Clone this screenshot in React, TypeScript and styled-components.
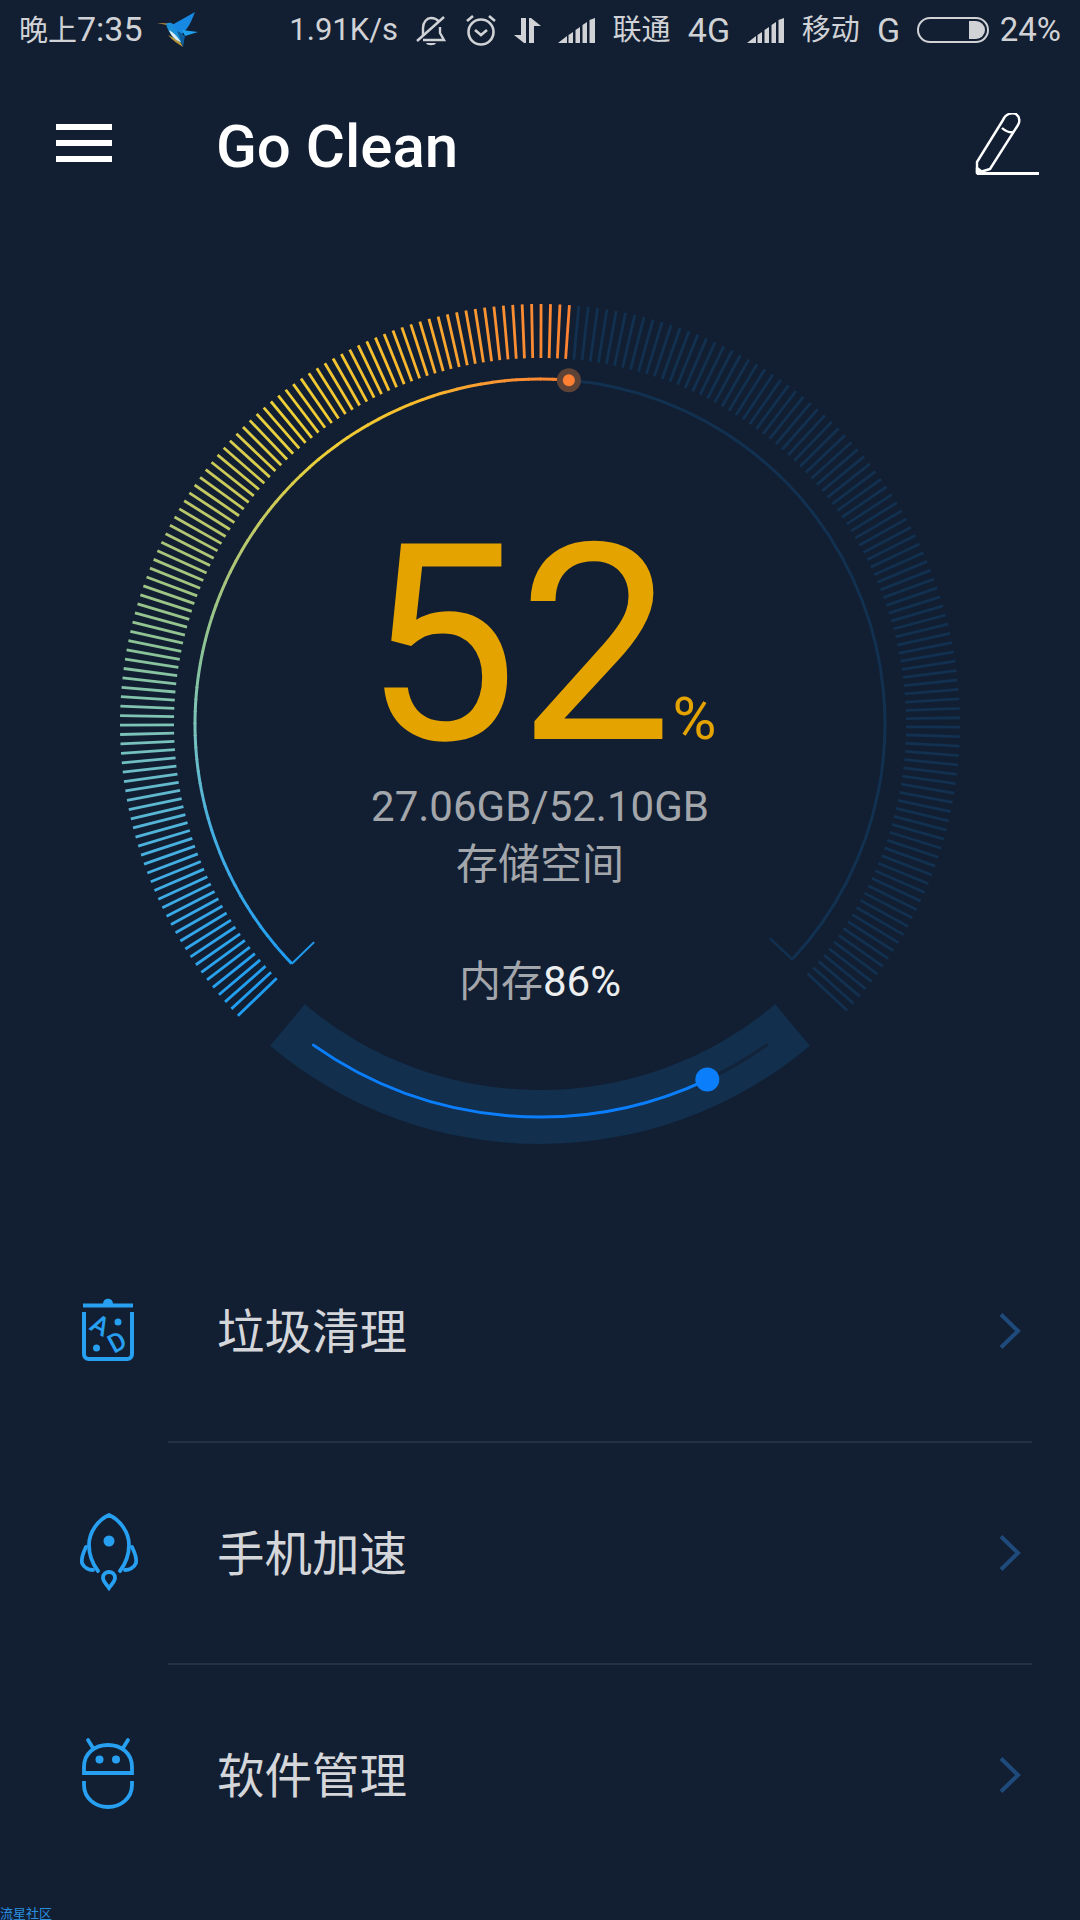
import { createGlobalStyle, styled } from "styled-components";

const GlobalStyle = createGlobalStyle`
    html, body {
        margin: 0;
        padding: 0;
        background: #121f32;
    }
    * {
        box-sizing: border-box;
    }
`;

const FONT = `Roboto, "Noto Sans CJK SC", sans-serif`;
const ICON_BLUE = "#27a0f2";
const CENTER = 430;
const START = -134;
const END = 133;
const STEP = 267 / 207;
const FILL_ANGLE = 4.8;
const INACTIVE = "#12304f";

const Page = styled.div`
    position: relative;
    width: 1080px;
    height: 1920px;
    overflow: hidden;
    background: #121f32;
    font-family: ${FONT};
`;

const StatusBar = styled.div`
    display: flex;
    align-items: center;
    justify-content: space-between;
    height: 60px;
    padding: 0 19px;
    color: #d0d2d6;
`;

const StatusGroup = styled.div<{ $gap: number }>`
    display: flex;
    align-items: center;
    gap: ${({ $gap }) => $gap}px;
`;

const StatusText = styled.span<{ $size: number }>`
    font-size: ${({ $size }) => $size}px;
    line-height: 60px;
    white-space: nowrap;
    small {
        font-size: 29px;
    }
`;

const Battery = styled.div`
    display: flex;
    justify-content: flex-end;
    width: 72px;
    height: 26px;
    padding: 2px;
    margin-right: -7px;
    border: 2px solid #d0d2d6;
    border-radius: 13px;
`;

const BatteryFill = styled.div`
    width: 16px;
    height: 18px;
    background: #d0d2d6;
    border-radius: 0 9px 9px 0;
`;

const Toolbar = styled.div`
    display: flex;
    align-items: center;
    height: 172px;
    padding: 0 40px 0 56px;
`;

const Burger = styled.div`
    display: flex;
    flex-direction: column;
    gap: 10px;
    width: 56px;
    margin-bottom: 6px;
    span {
        display: block;
        height: 6px;
        background: #fff;
    }
`;

const Title = styled.h1`
    flex: 1;
    margin: 2px 0 0 104px;
    color: #fff;
    font-size: 60px;
    font-weight: 500;
    line-height: 70px;
`;

const GaugeArea = styled.div`
    position: relative;
    display: flex;
    justify-content: center;
    height: 989px;
    padding-top: 62px;
`;

const Readout = styled.div`
    position: absolute;
    top: 62px;
    left: 0;
    right: 0;
    display: flex;
    flex-direction: column;
    align-items: center;
    padding-top: 251px;
`;

const Percent = styled.div`
    display: flex;
    align-items: baseline;
    height: 200px;
    color: #e5a300;
    font-size: 275px;
    line-height: 200px;
    small {
        font-size: 60px;
    }
`;

const Usage = styled.div`
    margin-top: 37px;
    color: #a3a6ab;
    font-size: 42px;
    line-height: 50px;
`;

const UsageLabel = styled.div`
    margin-top: 5px;
    color: #a3a6ab;
    font-size: 42px;
    line-height: 56px;
`;

const Memory = styled.div`
    margin-top: 64px;
    color: #a3a6ab;
    font-size: 42px;
    line-height: 50px;
    b {
        color: #eceef0;
        font-weight: 400;
    }
`;

const Menu = styled.div`
    display: flex;
    flex-direction: column;
`;

const Row = styled.div`
    display: flex;
    align-items: center;
    height: 220px;
    padding: 0 59px 0 60px;
`;

const RowLabel = styled.span`
    flex: 1;
    margin-left: 57px;
    padding-bottom: 5px;
    color: #d4d6da;
    font-size: 47.5px;
`;

const Divider = styled.div`
    height: 2px;
    margin: 0 48px 0 168px;
    background: #233147;
`;

const Watermark = styled.span`
    position: absolute;
    left: 0;
    bottom: -2px;
    color: #2a8fe0;
    font-size: 13px;
    line-height: 16px;
`;

const polar = (deg: number, r: number) => {
    const a = (deg * Math.PI) / 180;
    return { x: CENTER + r * Math.sin(a), y: CENTER - r * Math.cos(a) };
};

const arc = (from: number, to: number, r: number) => {
    const a = polar(from, r);
    const b = polar(to, r);
    const large = Math.abs(to - from) > 180 ? 1 : 0;
    const sweep = to > from ? 1 : 0;
    return `M${a.x} ${a.y}A${r} ${r} 0 ${large} ${sweep} ${b.x} ${b.y}`;
};

const STOPS: [number, number[]][] = [
    [0, [31, 157, 242]],
    [0.18, [70, 175, 226]],
    [0.31, [125, 195, 185]],
    [0.4, [140, 195, 150]],
    [0.52, [178, 198, 115]],
    [0.68, [236, 208, 55]],
    [0.8, [248, 190, 45]],
    [0.92, [250, 145, 50]],
    [1, [255, 130, 50]],
];

const colorAt = (deg: number) => {
    const t = Math.min(1, (deg - START) / (FILL_ANGLE - START));
    let i = 0;
    while (i < STOPS.length - 2 && t > STOPS[i + 1][0]) i++;
    const [t0, c0] = STOPS[i];
    const [t1, c1] = STOPS[i + 1];
    const k = (t - t0) / (t1 - t0);
    const c = c0.map((v, n) => Math.round(v + (c1[n] - v) * k));
    return `rgb(${c.join(",")})`;
};

const Gauge = () => {
    const ticks = [];
    for (let i = 0; i <= 207; i++) {
        const deg = START + i * STEP;
        const a = polar(deg, 366);
        const b = polar(deg, 420);
        ticks.push(
            <line
                key={i}
                x1={a.x}
                y1={a.y}
                x2={b.x}
                y2={b.y}
                stroke={deg <= FILL_ANGLE ? colorAt(deg) : INACTIVE}
                strokeWidth={2.8}
            />,
        );
    }

    const segments = [];
    for (let deg = START; deg < FILL_ANGLE; deg += 2) {
        segments.push(
            <path key={deg} d={arc(deg, Math.min(deg + 2.2, FILL_ANGLE), 345)} stroke={colorAt(deg)} strokeWidth={3} fill="none" />,
        );
    }

    const tailL0 = polar(START, 345);
    const tailL1 = polar(START, 314);
    const tailR0 = polar(END, 345);
    const tailR1 = polar(END, 314);
    const dot = polar(FILL_ANGLE, 345);
    const band = 393;
    const memDot = polar(180 - 25.2, 393);
    const bandPath = (() => {
        const a = polar(180 + 40, 420);
        const b = polar(180 - 40, 420);
        const c = polar(180 - 40, 366);
        const d = polar(180 + 40, 366);
        return `M${a.x} ${a.y}A420 420 0 0 0 ${b.x} ${b.y}L${c.x} ${c.y}A366 366 0 0 1 ${d.x} ${d.y}Z`;
    })();

    return (
        <svg width={860} height={860} viewBox="0 0 860 860">
            {ticks}
            <path d={arc(FILL_ANGLE, END, 345)} stroke={INACTIVE} strokeWidth={3} fill="none" />
            {segments}
            <line x1={tailL0.x} y1={tailL0.y} x2={tailL1.x} y2={tailL1.y} stroke={colorAt(START)} strokeWidth={2} />
            <line x1={tailR0.x} y1={tailR0.y} x2={tailR1.x} y2={tailR1.y} stroke={INACTIVE} strokeWidth={2.5} />
            <circle cx={dot.x} cy={dot.y} r={12} fill="#5e4236" />
            <circle cx={dot.x} cy={dot.y} r={6} fill="#ff8033" />
            <path d={bandPath} fill="#122f4e" />
            <path d={arc(180 - 35.2, 180 - 25.2, band)} stroke="#13233a" strokeWidth={3} fill="none" strokeLinecap="round" />
            <path d={arc(180 + 35.2, 180 - 25.2, band)} stroke="#0b7ffb" strokeWidth={3} fill="none" strokeLinecap="round" />
            <circle cx={memDot.x} cy={memDot.y} r={12} fill="#0b7ffb" />
        </svg>
    );
};

const Bird = () => (
    <svg width={42} height={36} viewBox="7 7 42 36">
        <path d="M7 18L18 18.5L17 20Z" fill="#c79a3a" />
        <path d="M18 30C22 35 28 39 33 42L30 36Z" fill="#b8963a" />
        <path d="M16 19C20 16 25 19 27 24L33 38C26 36 19 30 16 19Z" fill="#1b8fd8" />
        <path d="M19 25C23 27 27 31 31 37C25 35 21 31 19 25Z" fill="#dcecf5" />
        <path d="M22 20L45 7C42 15 38 24 32 29L27 26Z" fill="#1789e2" />
        <path d="M32 25L48 27L35 31Z" fill="#1ea0ec" />
        <path d="M27 26L35 31L33 42Z" fill="#0d5f9e" />
    </svg>
);

const BellOff = () => (
    <svg width={32} height={31} viewBox="0 0 30 31" fill="none" stroke="#d0d2d6" strokeWidth={2.4}>
        <path d="M7 21V13C7 7 11 3 15 3C18 3 21 4 23 7M24 12V18L28 25H7" />
        <path d="M1 26L28 2" />
        <path d="M10 28H20C19 31 11 31 10 28Z" fill="#d0d2d6" stroke="none" />
    </svg>
);

const Alarm = () => (
    <svg width={32} height={32} viewBox="0 0 32 32" fill="none" stroke="#d0d2d6" strokeWidth={2.6}>
        <circle cx={16} cy={18} r={12.5} />
        <path d="M10 16L16 21L22 16" />
        <path d="M2 7L8 2M30 7L24 2" />
    </svg>
);

const DataArrows = () => (
    <svg width={27} height={25} viewBox="0 0 27 25" fill="#d0d2d6">
        <path d="M12 0H7V17H0L10 25H12Z" />
        <path d="M15 25H20V8H27L17 0H15Z" />
    </svg>
);

const Signal = () => (
    <svg width={37} height={25} viewBox="0 0 37 25" fill="#d0d2d6">
        <path d="M0 25L9 18V25Z" />
        <path d="M10.5 17L15 14V25H10.5Z" />
        <path d="M17.5 12L22 9V25H17.5Z" />
        <path d="M24.5 7L29 4V25H24.5Z" />
        <path d="M31.5 2L37 0V25H31.5Z" />
    </svg>
);

const Pencil = () => (
    <svg width={66} height={66} viewBox="14 23 66 66" fill="none" stroke="#fff" strokeWidth={2.4} strokeLinejoin="round">
        <path d="M17 83L17 72L43 30C45 24 52 22 56 24C60 27 60 32 58 35L30 79Z" />
        <path d="M42 38C45 41 50 43 53 42" />
        <path d="M17 83V78L21 81Z" fill="#fff" />
        <path d="M17 83.5H79" strokeWidth={3} />
    </svg>
);

const TrashIcon = () => (
    <svg width={100} height={100} viewBox="0 1 100 100" fill="none" stroke={ICON_BLUE} strokeWidth={4}>
        <path d="M23 25.5H73" />
        <path d="M43 24C43 17 53 17 53 24Z" fill={ICON_BLUE} stroke="none" />
        <path d="M24 32V74C24 77 26 79 29 79H67C70 79 72 77 72 74V32" />
        <circle cx={58} cy={42} r={3.5} fill={ICON_BLUE} stroke="none" />
        <circle cx={36.5} cy={68} r={3.5} fill={ICON_BLUE} stroke="none" />
        <text x={40} y={54} textAnchor="middle" fontFamily="Roboto" fontWeight={500} fontSize={26} fill={ICON_BLUE} stroke="none" transform="rotate(28 40 45)">A</text>
        <text x={57} y={71} textAnchor="middle" fontFamily="Roboto" fontWeight={500} fontSize={26} fill={ICON_BLUE} stroke="none" transform="rotate(-28 57 62)">D</text>
    </svg>
);

const RocketIcon = () => (
    <svg width={100} height={100} viewBox="0 3 100 100" fill="none" stroke={ICON_BLUE} strokeWidth={3.8} strokeLinecap="round">
        <path d="M38 71C32 63 29 54 29 45C29 32 38 20 49 15C60 20 69 32 69 45C69 54 66 63 60 71" />
        <path d="M26 47C23 53 21 58 22 63C24 68 29 70 33 70" />
        <path d="M72 47C75 53 77 58 76 63C74 68 69 70 65 70" />
        <path d="M49 88C46 84 43 81 43 78C43 74 46 72 49 72C52 72 55 74 55 78C55 81 52 84 49 88Z" />
        <circle cx={49} cy={41} r={5.5} fill={ICON_BLUE} stroke="none" />
    </svg>
);

const AndroidIcon = () => (
    <svg width={100} height={100} viewBox="0 5 100 100" fill="none" stroke={ICON_BLUE} strokeWidth={3.8}>
        <path d="M24 53V47C24 33 35 25 48 25C61 25 72 33 72 47V53Z" />
        <path d="M28 20L33 28M68 20L63 28" strokeLinecap="round" />
        <circle cx={39.5} cy={39.5} r={4} fill={ICON_BLUE} stroke="none" />
        <circle cx={56} cy={39.5} r={4} fill={ICON_BLUE} stroke="none" />
        <path d="M24 61V65C24 78 35 87 48 87C61 87 72 78 72 65V61" />
    </svg>
);

const Chevron = () => (
    <svg width={22} height={36} viewBox="0 0 22 36" fill="none" stroke="#1f4a7c" strokeWidth={4}>
        <path d="M2 1.5L19 18L2 34.5" />
    </svg>
);

export default function App() {
    return (
        <Page>
            <GlobalStyle />
            <StatusBar>
                <StatusGroup $gap={14}>
                    <StatusText $size={34}>
                        <small>晚上</small>7:35
                    </StatusText>
                    <Bird />
                </StatusGroup>
                <StatusGroup $gap={17.3}>
                    <StatusText $size={31}>1.91K/s</StatusText>
                    <BellOff />
                    <Alarm />
                    <DataArrows />
                    <Signal />
                    <StatusText $size={29}>联通</StatusText>
                    <StatusText $size={34}>4G</StatusText>
                    <Signal />
                    <StatusText $size={29}>移动</StatusText>
                    <StatusText $size={34}>G</StatusText>
                    <Battery>
                        <BatteryFill />
                    </Battery>
                    <StatusText $size={33}>24%</StatusText>
                </StatusGroup>
            </StatusBar>
            <Toolbar>
                <Burger>
                    <span />
                    <span />
                    <span />
                </Burger>
                <Title>Go Clean</Title>
                <Pencil />
            </Toolbar>
            <GaugeArea>
                <Gauge />
                <Readout>
                    <Percent>
                        52<small>%</small>
                    </Percent>
                    <Usage>27.06GB/52.10GB</Usage>
                    <UsageLabel>存储空间</UsageLabel>
                    <Memory>
                        内存<b>86%</b>
                    </Memory>
                </Readout>
            </GaugeArea>
            <Menu>
                <Row>
                    <TrashIcon />
                    <RowLabel>垃圾清理</RowLabel>
                    <Chevron />
                </Row>
                <Divider />
                <Row>
                    <RocketIcon />
                    <RowLabel>手机加速</RowLabel>
                    <Chevron />
                </Row>
                <Divider />
                <Row>
                    <AndroidIcon />
                    <RowLabel>软件管理</RowLabel>
                    <Chevron />
                </Row>
            </Menu>
            <Watermark>流星社区</Watermark>
        </Page>
    );
}
